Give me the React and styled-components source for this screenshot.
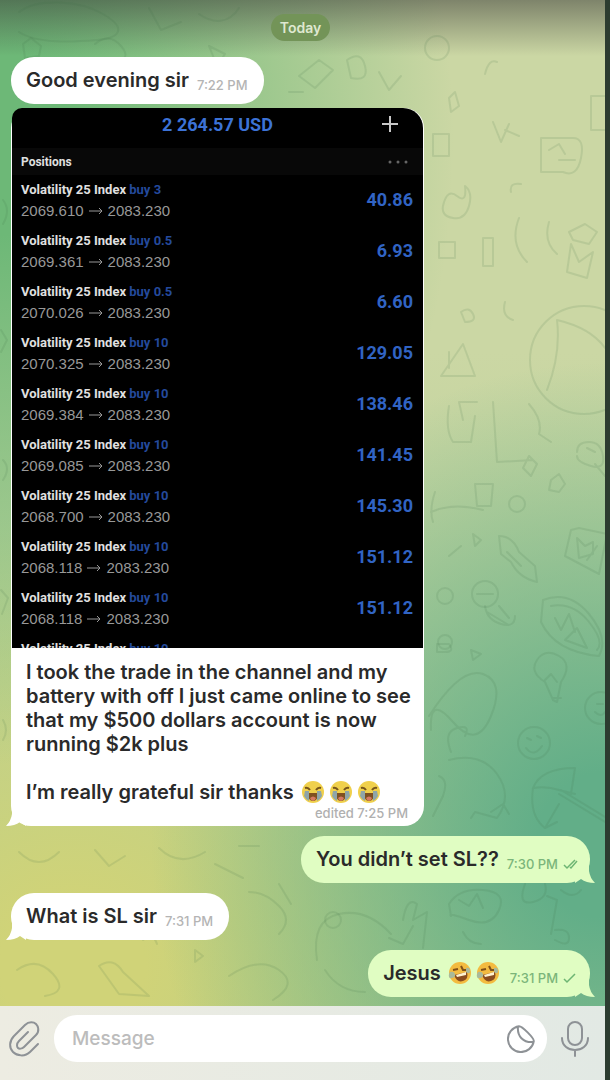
import styled, { createGlobalStyle } from "styled-components";

const positions = [
  { lot: "buy 3", open: "2069.610", profit: "40.86" },
  { lot: "buy 0.5", open: "2069.361", profit: "6.93" },
  { lot: "buy 0.5", open: "2070.026", profit: "6.60" },
  { lot: "buy 10", open: "2070.325", profit: "129.05" },
  { lot: "buy 10", open: "2069.384", profit: "138.46" },
  { lot: "buy 10", open: "2069.085", profit: "141.45" },
  { lot: "buy 10", open: "2068.700", profit: "145.30" },
  { lot: "buy 10", open: "2068.118", profit: "151.12" },
  { lot: "buy 10", open: "2068.118", profit: "151.12" },
  { lot: "buy 10" },
];

function Doodles() {
  return (
    <Pattern viewBox="0 0 606 1006" preserveAspectRatio="xMaxYMin slice" aria-hidden="true">
      {/* top strip */}
      <path d="M20 12c18-14 60-12 84 2s18 24-6 26-60 4-78-8M150 8l12 22 20-8M200 14c14 10 30 10 40-6" />
      <path d="M24 44l8-6 10 8-2 10-14 2zM96 44q14-12 26 2t-8 16M210 46l16 8-8 12z" />
      <path d="M300 76l20-16 14 10-18 18zM348 60q14-10 18 6t-14 12zM380 72l10 18 12-14M290 92h14" />
      <circle cx="438" cy="48" r="12" />
      <path d="M486 74q4-16 12-12M450 98l6-6 4 14-8 6zM494 122l8 20 8-18M506 130l14 6M434 134h16v22h-16z" />
      <path d="M592 96h14M592 96v34h14M542 138h32q12 0 8 20t-18 14h-22zM550 150l10-6 6 10M560 160h16" />
      <path d="M444 206q4-18 14-10t8-10q8 6 4 20t-16 12-10-12M440 242h16v16h-16zM484 238h10v28h-10z" />
      <path d="M512 192q-2-10 10-8M520 218q-10 26 8 44M550 222q-6 20 8 32M570 232l16-8 12 8-8 12-16-4z" />
      <path d="M572 244l8 18 14-10-6 26-20-6zM506 302q-4 14 8 18M462 312q8-6 12 2t-8 8z" />
      <path d="M442 376l22-32 12 32zM450 352v16M478 402h-18l4 18M450 406q-4 24 4 36h18l4-26" />
      {/* beach ball */}
      <circle cx="585" cy="360" r="54" />
      <path d="M558 320q4 34-10 70M558 320q34 8 48 28" />
      {/* right column */}
      <path d="M494 402l4 60 36-2M530 404q14 16 10 30l12 8M530 456l8 8-6 12-8-8z" />
      <path d="M578 452q0-10 12-10t14 14-12 10-14-10M596 464l10 12M588 448l8 4" />
      <path d="M436 492q-6 18-2 30M432 512q22-10 52-2M476 484h18l-2 22h-14zM552 480l8-6 6 10-6 8-10-2z" />
      <circle cx="518" cy="504" r="8" />
      <path d="M500 536q14 0 20 16l16 14 2 16q-18-4-26-20l-10-8zM508 552l14 14M474 534l8 6-6 6zM450 556l12-10" />
      <path d="M572 530l-6 26 34 18 8-40-28-6zM578 538l8 8 8-4v12l-14 4zM588 560l10-14" />
      <circle cx="446" cy="596" r="8" />
      <circle cx="486" cy="594" r="13" />
      <path d="M478 594h16M486 606q2 14 16 18t14-8M488 612l20 12M500 606l10 12" />
      <path d="M544 600q26-10 46 14t10 42q-44-4-58-34zM552 606q22-4 38 16t8 28M556 618l6 12 8-16 6 18M566 640l12-12 10 20z" />
      <path d="M554 700l-8-18q-16-10-8-22t22-4 2 26l-4 20zM546 680l6-6 6 8M554 698h8M438 644h12q6 8-4 8h-8zM472 650l10 4-8 6z" />
      <circle cx="446" cy="642" r="7" />
      <path d="M430 716q32-50 54-42t8 42-38 6-22 8M452 752q-8-20 6-24t8 8M450 760q32-8 48 14t0 44l-22-6-4 6M492 812l12-8 6 10" />
      <circle cx="535" cy="743" r="16" />
      <path d="M528 738l4 2M538 736l4 2M527 748q8 10 16-2M440 776q10 4 4 20l-10 20" />
      <circle cx="602" cy="708" r="16" />
      <path d="M598 704h6M596 712q6 6 10 0" />
      <path d="M534 788q8-20 42-20l-4 26M534 788q14-2 26 2l16 4M534 788q-4 28 12 40l14-24M546 828l12-6M560 794l46 28M562 790l44 27" />
      {/* lower part */}
      <path d="M318 960q-6-40 22-46t52 20M326 970q14 22 40 22M404 920q4-24 14-16l-4 16 14-8-4 36M390 938l14 6 10-18" />
      <circle cx="334" cy="920" r="8" />
      <path d="M450 904q10-16 34-14t16 20-30 10-18-4zM460 900l10 6 8-12 6 14M464 932q6 12 18 12M526 884q-8 22 8 18t12-18M548 896l10 4-6 34M562 890q12 10 20 0M556 930q14-2 14 8t-14 2" />
      <path d="M100 966q14-10 24 6l26 24-30-2zM18 970q20-14 36 4t-8 22M230 976q30-20 50-6t-6 30M196 950l8 6-8 6zM144 940q10-8 14 4" />
      <path d="M250 892q16 0 30 14t0 28M280 884l12 20M20 852q20 20 40 0M96 850l14 16 16-10M160 848q20 20 46 4M216 864l28 14M240 846h20" />
      <path d="M4 200q8 10 0 24M2 330l6 10-6 12M4 460q8 8 0 20M2 590l7 8-6 16M4 720q6 10 0 20" />
    </Pattern>
  );
}

function LaughCry() {
  return (
    <Emoji viewBox="0 0 24 24" role="img" aria-label="loudly crying face">
      <circle cx="12" cy="12" r="11" fill="#f0d04c" />
      <path d="M4 8q3-1 5 2M20 8q-3-1-5 2" stroke="#76541c" strokeWidth="2" fill="none" />
      <path d="M7 13h10q0 8-5 8t-5-8z" fill="#805020" />
      <path d="M9 18q3-3 6 0-1 3-3 3t-3-3z" fill="#d77a62" />
      <path d="M4 11h4v10q-3-1-5-5zM16 11h4l1 5q-2 4-5 5z" fill="#8fa5a8" />
    </Emoji>
  );
}

function Rofl() {
  return (
    <Emoji viewBox="0 0 24 24" role="img" aria-label="rolling on the floor laughing">
      <circle cx="12" cy="12" r="11" fill="#f3bb40" />
      <path d="M5 9l5-1M13 5l2 4 4 0" stroke="#805018" strokeWidth="2" fill="none" />
      <path d="M6 14l13-3q2 7-4 9t-9-6z" fill="#8a4c1e" />
      <path d="M8 14l10-3v3l-9 2z" fill="#fff3d0" />
      <path d="M2 11q4-1 5 2t-3 4-3-4zM18 7q4-1 4 3t-4 1z" fill="#a9b99a" />
    </Emoji>
  );
}

function Tail({ side, color }) {
  return (
    <TailShape viewBox="0 0 20 20" $side={side} aria-hidden="true">
      <path d="M6 0v8Q5 15 0 20q9 0 14-4L20 20V0z" fill={color} />
    </TailShape>
  );
}

function Ticks({ read }) {
  return (
    <TickIcon viewBox="0 0 16 12" role="img" aria-label={read ? "read" : "sent"}>
      <path d="M2 7l3 3 8-8" />
      {read && <path d="M8 9l1 1 6-7" />}
    </TickIcon>
  );
}

function Message({ text, time, own, read, tail, gap, children }) {
  return (
    <Bubble $own={own} $gap={gap}>
      <MessageText>
        {text}
        {children}
      </MessageText>
      <Time $own={own}>
        {time}
        {own && <Ticks read={read} />}
      </Time>
      {tail && <Tail side={own ? "right" : "left"} color={own ? "#e0fdc2" : "#ffffff"} />}
    </Bubble>
  );
}

function TradeShot() {
  return (
    <Shot>
      <Balance>
        <span />
        <span>2 264.57 USD</span>
        <PlusIcon viewBox="0 0 18 18" aria-hidden="true">
          <path d="M9 1v16M1 9h16" />
        </PlusIcon>
      </Balance>
      <PositionsHead>
        Positions
        <DotsIcon viewBox="0 0 20 4" aria-hidden="true">
          <circle cx="2" cy="2" r="1.5" />
          <circle cx="10" cy="2" r="1.5" />
          <circle cx="18" cy="2" r="1.5" />
        </DotsIcon>
      </PositionsHead>
      {positions.map((p, i) => (
        <Position key={i}>
          <div>
            <Symbol>
              Volatility 25 Index <Lot>{p.lot}</Lot>
            </Symbol>
            {p.open && (
              <Prices>
                {p.open}
                <ArrowIcon viewBox="0 0 16 8" aria-label="to">
                  <path d="M1 4h13M11 1l3 3-3 3" />
                </ArrowIcon>
                2083.230
              </Prices>
            )}
          </div>
          {p.profit && <Profit>{p.profit}</Profit>}
        </Position>
      ))}
    </Shot>
  );
}

export default function App() {
  return (
    <>
      <GlobalStyle />
      <Screen>
        <Chat>
          <Doodles />
          <DayLabel>Today</DayLabel>
          <Message text="Good evening sir" time="7:22 PM" gap={16} />
          <PhotoBubble>
            <TradeShot />
            <Caption>
              <p>
                I took the trade in the channel and my battery with off I just came online to see
                that my $500 dollars account is now running $2k plus
              </p>
              <p>
                I’m really grateful sir thanks <LaughCry />
                <LaughCry />
                <LaughCry />
              </p>
              <Edited>edited 7:25 PM</Edited>
            </Caption>
            <Tail side="left" color="#ffffff" />
          </PhotoBubble>
          <Message text="You didn’t set SL??" time="7:30 PM" own read tail gap={10} />
          <Message text="What is SL sir" time="7:31 PM" tail gap={10} />
          <Message text="Jesus " time="7:31 PM" own tail gap={10}>
            <Rofl />
            <Rofl />
          </Message>
        </Chat>
        <Composer>
          <IconButton type="button" aria-label="Attach">
            <svg width="32" height="36" viewBox="0 0 32 36">
              <path d="M30 23l-8 8c-5 5-13 4-17 0s-4-11 1-16L17 4c4-4 9-3 11-1s4 7 0 11L16 26c-2 2-5 2-6 1s-2-4 1-7l9-9" />
            </svg>
          </IconButton>
          <Field>
            <Input type="text" placeholder="Message" aria-label="Message" />
            <IconButton type="button" aria-label="Stickers">
              <svg width="28" height="28" viewBox="0 0 28 28">
                <path d="M12 1.200A13 13 0 1 0 26.800 16C27 13 15 1 12 1.200zM11 1.500C10 11 16 18 26.500 17" />
              </svg>
            </IconButton>
          </Field>
          <IconButton type="button" aria-label="Record voice message">
            <svg width="28" height="36" viewBox="0 0 28 36">
              <rect x="7" y="1" width="14" height="23" rx="7" />
              <path d="M1 17c0 16 26 16 26 0M14 29v6" />
            </svg>
          </IconButton>
        </Composer>
      </Screen>
    </>
  );
}

const GlobalStyle = createGlobalStyle`
  * {
    box-sizing: border-box;
  }

  body {
    margin: 0;
    font-family: Inter, "Liberation Sans", sans-serif;
    color: #2a2a2a;
  }

  p {
    margin: 0;
  }
`;

const Screen = styled.div`
  min-height: 100vh;
  display: flex;
  flex-direction: column;
  border-right: 5px solid #2c3c30;
`;

const Chat = styled.main`
  position: relative;
  isolation: isolate;
  overflow: hidden;
  flex: 1;
  display: flex;
  flex-direction: column;
  align-items: flex-start;
  padding: 14px 15px 9px 11px;
  background:
    linear-gradient(rgba(50, 50, 50, 0.5), rgba(50, 50, 50, 0) 56px),
    radial-gradient(ellipse 75% 48% at 100% 84%, #62ae88 15%, rgba(98, 174, 136, 0) 100%),
    radial-gradient(ellipse 75% 62% at 0% 14%, #6db877 15%, rgba(109, 184, 119, 0) 100%),
    radial-gradient(ellipse 80% 45% at 12% 96%, #d0d378 15%, rgba(208, 211, 120, 0) 100%),
    linear-gradient(#cbd7a4 35%, #a9cb8e);
`;

const Pattern = styled.svg`
  position: absolute;
  inset: 0;
  z-index: -1;
  width: 100%;
  height: 100%;
  fill: none;
  stroke: rgba(60, 110, 70, 0.13);
  stroke-width: 2;
  stroke-linejoin: round;
  stroke-linecap: round;
`;

const DayLabel = styled.div`
  align-self: center;
  padding: 0 9px;
  border-radius: 14px;
  background: #739458;
  color: #dfe8d0;
  font-size: 14px;
  font-weight: 600;
  line-height: 27px;
`;

const Bubble = styled.div`
  position: relative;
  display: flex;
  align-items: flex-end;
  gap: 8px;
  align-self: ${({ $own }) => ($own ? "flex-end" : "flex-start")};
  margin-top: ${({ $gap }) => $gap}px;
  padding: 11px ${({ $own }) => ($own ? 12 : 16)}px 12px 15px;
  border-radius: 23px;
  background: ${({ $own }) => ($own ? "#e0fdc2" : "#ffffff")};
`;

const MessageText = styled.span`
  font-size: 20px;
  font-weight: 600;
  line-height: 24px;
`;

const Time = styled.time`
  display: flex;
  align-items: center;
  gap: 4px;
  color: ${({ $own }) => ($own ? "#7bb57a" : "#b4b4b4")};
  font-size: 13px;
  font-weight: 500;
  line-height: 14px;
`;

const TickIcon = styled.svg`
  width: 16px;
  height: 12px;
  fill: none;
  stroke: #6db573;
  stroke-width: 1.5;
`;

const TailShape = styled.svg`
  position: absolute;
  z-index: -1;
  bottom: 0;
  ${({ $side }) => $side}: -5px;
  width: 20px;
  height: 20px;
  transform: ${({ $side }) => ($side === "right" ? "scaleX(-1)" : "none")};
`;

const PhotoBubble = styled.article`
  position: relative;
  width: 70%;
  min-width: 413px;
  margin-top: 4px;
  border-radius: 20px;
  background: #ffffff;
`;

const Shot = styled.div`
  height: 540px;
  margin: 0 1px;
  overflow: hidden;
  border-radius: 10px 20px 0 0;
  background: #000;
  color: #e0e0e0;
  font-family: Roboto, "Liberation Sans", sans-serif;
`;

const Balance = styled.div`
  height: 40px;
  display: grid;
  grid-template-columns: 1fr auto 1fr;
  align-items: center;
  padding: 0 24px 8px;
  color: #3c72d6;
  font-size: 18px;
  font-weight: 700;
`;

const PlusIcon = styled.svg`
  width: 18px;
  height: 18px;
  justify-self: end;
  fill: none;
  stroke: #c8c8c8;
  stroke-width: 2;
`;

const PositionsHead = styled.div`
  height: 27px;
  display: flex;
  justify-content: space-between;
  align-items: center;
  padding: 0 15px 0 9px;
  background: #080808;
  font-size: 12px;
  font-weight: 700;
`;

const DotsIcon = styled.svg`
  width: 20px;
  height: 4px;
  fill: #666;
`;

const Position = styled.div`
  height: 51px;
  display: flex;
  justify-content: space-between;
  align-items: flex-start;
  padding: 4px 10px 0 9px;
`;

const Symbol = styled.div`
  font-size: 13px;
  font-weight: 700;
  line-height: 21px;
`;

const Lot = styled.span`
  color: #244a9c;
`;

const Prices = styled.div`
  display: flex;
  align-items: center;
  gap: 4px;
  color: #989898;
  font-family: "Liberation Sans", sans-serif;
  font-size: 15px;
  line-height: 21px;
`;

const ArrowIcon = styled.svg`
  width: 16px;
  height: 8px;
  fill: none;
  stroke: #989898;
`;

const Profit = styled.div`
  color: #3164c4;
  font-size: 18px;
  font-weight: 700;
  line-height: 42px;
`;

const Caption = styled.div`
  display: flex;
  flex-direction: column;
  gap: 24px;
  padding: 12px 12px 4px 15px;
  font-size: 20px;
  font-weight: 600;
  line-height: 24px;
`;

const Edited = styled.time`
  align-self: flex-end;
  margin-top: -24px;
  padding-right: 4px;
  color: #b0b0b0;
  font-size: 13px;
  font-weight: 500;
  line-height: 18px;
`;

const Emoji = styled.svg`
  width: 24px;
  height: 24px;
  margin: 0 2px;
  vertical-align: top;
`;

const Composer = styled.footer`
  display: flex;
  align-items: flex-start;
  gap: 14px;
  padding: 9px 16px 18px 8px;
  background: linear-gradient(90deg, #edece2, #e2e9e4);
`;

const Field = styled.div`
  flex: 1;
  height: 47px;
  display: flex;
  align-items: center;
  padding: 0 12px 0 18px;
  border-radius: 23px;
  background: #ffffff;
`;

const Input = styled.input`
  flex: 1;
  min-width: 0;
  padding: 0;
  border: none;
  outline: none;
  background: none;
  font: 500 19px Inter, sans-serif;

  &::placeholder {
    color: #bcbcbc;
    opacity: 1;
  }
`;

const IconButton = styled.button`
  display: flex;
  align-self: center;
  padding: 0;
  border: none;
  background: none;
  cursor: pointer;

  svg {
    fill: none;
    stroke: #8e9296;
    stroke-width: 2;
    stroke-linecap: round;
  }
`;
